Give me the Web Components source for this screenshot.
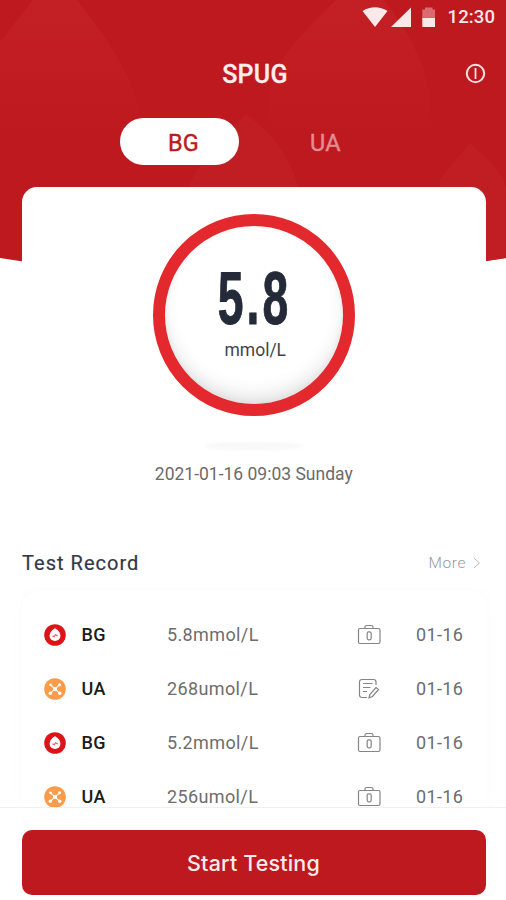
<!DOCTYPE html>
<html lang="en">
<head>
<meta charset="utf-8">
<title>SPUG</title>
<style>
body{margin:0;background:#fff;font-family:Roboto,"Liberation Sans",sans-serif}
</style>
</head>
<body>
<spug-app></spug-app>
<script>
const define=(name,html)=>{
  customElements.define(name,class extends HTMLElement{
    connectedCallback(){
      if(this.shadowRoot)return;
      const t=document.createElement('template');
      t.innerHTML=typeof html==='function'?html(this):html;
      this.attachShadow({mode:'open'}).append(t.content.cloneNode(true));
    }
  });
};

define('status-bar',`<style>
:host{display:flex;align-items:center;justify-content:flex-end;height:34px;padding-right:11px;color:#fbe6e7;box-sizing:border-box;font-weight:500;font-size:18.5px;line-height:34px;letter-spacing:.1px}
svg{display:block;margin-right:12px}
</style>
<svg width="74" height="22" viewBox="362 6 74 22"><path fill="#fbe9e9" d="M362.500 11Q375 3.500 387.500 11L375 27ZM391 27L411 7.500V27ZM422.300 17.700H435V27H422.300Z"/><path fill="#db6b70" d="M422.300 17.700V9.500H425V7.500H432.500V9.500H435V17.700Z"/></svg><span><slot></slot></span>`);

define('app-title',`<style>
:host{display:grid;grid-template-columns:1fr auto 1fr;align-items:center;height:80px;padding:0 20px;color:#fdeeee}
h1{margin:2px 0 0 4px;font-size:25px;line-height:30px;font-weight:500;letter-spacing:.3px;-webkit-text-stroke:.3px}
svg{justify-self:end;display:block}
</style><span></span><h1><slot></slot></h1><svg width="21" height="22" viewBox="0 0 21 22" fill="none" stroke="#fbe3e3"><circle cx="10.500" cy="10.500" r="8.700" stroke-width="2"/><path d="M10.500 5V16" stroke-width="1.800"/></svg>`);

define('tab-item',`<style>
:host{display:flex;align-items:center;justify-content:center;width:119px;height:47px;box-sizing:border-box;padding:3px 0 0 9px;border-radius:24px;font-size:23.500px;font-weight:400;-webkit-text-stroke:.4px;color:#e08e92;letter-spacing:.3px}
:host([active]){background:#fff;color:#bd1a20}
</style><slot></slot>`);

define('result-dial',`<style>
:host{display:flex;flex-direction:column;align-items:center;box-sizing:border-box;width:202px;height:202px;border:12px solid #e4292e;border-radius:50%;background:#fff;box-shadow:inset 0 -12px 22px -10px #cfcfcf,inset 0 0 6px #f0f0f0;padding-top:45px;margin-left:1px}
b{font:700 73.500px/56px "Liberation Sans",Arial,sans-serif;color:#242a38;transform:scaleX(.63);letter-spacing:5px;margin-left:1px;-webkit-text-stroke:1px #242a38}
span{font-size:17.500px;line-height:20px;color:#41454d;margin:13px 0 0 2px}
</style><b><slot></slot></b><span><slot name="unit"></slot></span>`);

define('result-card',`<style>
:host{display:flex;flex-direction:column;align-items:center;background:#fff;border-radius:15px 15px 0 0;margin:0 20.500px 0 22px;height:351px;padding-top:26.500px;box-sizing:border-box}
i{width:100px;height:8px;margin-top:26px;border-radius:50%/60%;background:#f8f8f8;filter:blur(1.500px)}
time{font-size:17.500px;line-height:22px;margin-top:13px;color:#6b6b6b}
</style><slot></slot><i></i><time><slot name="time"></slot></time>`);

define('section-head',`<style>
:host{display:flex;justify-content:space-between;align-items:center;padding:0 25px 0 22px;height:50px;box-sizing:border-box}
h2{margin:0;font-size:20px;line-height:24px;font-weight:400;color:#333846;letter-spacing:1.030px;-webkit-text-stroke:.2px}
a{display:flex;align-items:center;gap:7px;font-size:15.500px;font-weight:300;color:#999;letter-spacing:.6px}
</style><h2><slot></slot></h2><a><slot name="link"></slot><svg width="8" height="12" viewBox="0 0 8 12" fill="none" stroke="#b9b9b9"><path d="M1 1L6.500 6L1 11"/></svg></a>`);

const kinds={
BG:`<circle cx="11" cy="11" r="10.800" fill="#dc1419"/><path d="M11 4.300C13.500 5.300 16.400 8.800 16.400 12A5.400 5.100 0 0 1 5.600 12C5.600 8.800 8.500 5.300 11 4.300Z" fill="#fff"/><path d="M8.500 11.700L10.200 12.800L11.500 10.800L13.700 12" fill="none" stroke="#e4585c" stroke-width="1.100"/>`,
UA:`<circle cx="11" cy="11" r="10.800" fill="#fb9c4b"/><path d="M6.500 6.800L15.500 15.200M15.500 6.800L6.500 15.200" stroke="#fff" stroke-width="1.100"/><g fill="#fff"><circle cx="11" cy="11" r="2.100"/><circle cx="6.500" cy="6.800" r="1.300"/><circle cx="15.500" cy="6.800" r="1.500"/><circle cx="6.300" cy="15.300" r="1.700"/><circle cx="15.700" cy="15.300" r="1.700"/></g>`};
const marks={
kit:`<rect x="1.500" y="4.500" width="21.500" height="15" rx="1.500"/><path d="M8 4.500V3Q8 1.500 9.500 1.500H14.500Q16 1.500 16 3V4.500"/><rect x="10.200" y="7.800" width="4" height="8" rx="1.500"/>`,
note:`<path d="M10 19.500H5Q2.500 19.500 2.500 17V4Q2.500 1.500 5 1.500H16.500Q19 1.500 19 4V7M6 5.500H15.500M6 9.500H13.500M6 13.500H10M19 9.500L21.500 11.500L15.500 18.500L12 19.800L12.800 16.500Z"/>`};
define('record-row',el=>`<style>
:host{display:grid;grid-template-columns:38px 85.500px 190px 59px auto;align-items:center;height:54px;padding-left:21.500px;font-size:18px;color:#6d6d6d;letter-spacing:.38px}
svg{display:block}
span{padding-bottom:1px}
.kind{font-weight:500;font-size:18px;color:#1c1c1c;letter-spacing:.4px}
.mark{fill:none;stroke:#858585;stroke-width:1.200}
</style><svg width="22" height="22" viewBox="0 0 22 22">${kinds[el.getAttribute('kind')]}</svg><span class="kind">${el.getAttribute('kind')}</span><span><slot></slot></span><svg class="mark" width="24" height="22" viewBox="0 0 24 22">${marks[el.getAttribute('mark')]}</svg><span><slot name="date"></slot></span>`);

define('record-list',`<style>
:host{display:block;box-sizing:border-box;height:219px;padding:3px 19px 0 22px}
div{border-radius:16px 16px 0 0;box-sizing:border-box;height:216px;padding-top:16.500px;box-shadow:0 0 16px #00000006;background:#fff}
</style><div><slot></slot></div>`);

define('action-bar',`<style>
:host{display:block;position:relative;box-sizing:border-box;height:93px;padding:22px 20px 0 22px;background:#fff;border-top:1px solid #f0f0f0}
button{display:block;width:100%;height:65px;border:0;border-radius:10px;background:#be191f;color:#fdebeb;font:500 21.500px/66px Inter,Roboto,sans-serif;padding:0 1px 0 0;letter-spacing:.16px}
</style><button><slot></slot></button>`);

define('spug-app',`<style>
:host{display:block;position:relative;width:506px;height:900px;overflow:hidden}
.bg{position:absolute;inset:0;z-index:-1}
nav{display:flex;gap:23px;height:73px;padding:4px 0 0 119.500px;box-sizing:border-box}
</style>
<svg class="bg" width="506" height="270" viewBox="0 0 506 270"><defs><clipPath id="c"><path d="M0 0H506V258Q253 300 0 258Z"/></clipPath><linearGradient id="g" x2="0" y2="1"><stop stop-color="#c32026"/><stop offset=".7" stop-color="#be191f"/></linearGradient></defs><g clip-path="url(#c)"><path fill="#be191f" d="M0 0H506V270H0Z"/><path fill="url(#g)" d="M0 42L33 0H77C105 37 142 83 140 135Q130 170 90 187H0Z"/><path fill="url(#g)" d="M336 0H384C409 33 431 70 430 110Q430 160 370 187H300Q265 150 269 100C270 65 300 35 336 0Z"/><path fill="#c11e24" d="M246 114C265 128 290 153 298 187H188C204 155 226 135 246 114ZM470 143C486 157 506 176 506 190V270H440V180Q454 161 470 143Z"/></g></svg>
<status-bar>12:30</status-bar>
<app-title>SPUG</app-title>
<nav><tab-item active>BG</tab-item><tab-item>UA</tab-item></nav>
<result-card><result-dial>5.8<span slot="unit">mmol/L</span></result-dial><span slot="time">2021-01-16 09:03 Sunday</span></result-card>
<section-head>Test Record<span slot="link">More</span></section-head>
<record-list>
<record-row kind="BG" mark="kit">5.8mmol/L<span slot="date">01-16</span></record-row>
<record-row kind="UA" mark="note">268umol/L<span slot="date">01-16</span></record-row>
<record-row kind="BG" mark="kit">5.2mmol/L<span slot="date">01-16</span></record-row>
<record-row kind="UA" mark="kit">256umol/L<span slot="date">01-16</span></record-row></record-list>
<action-bar>Start Testing</action-bar>`);
</script>
</body>
</html>
